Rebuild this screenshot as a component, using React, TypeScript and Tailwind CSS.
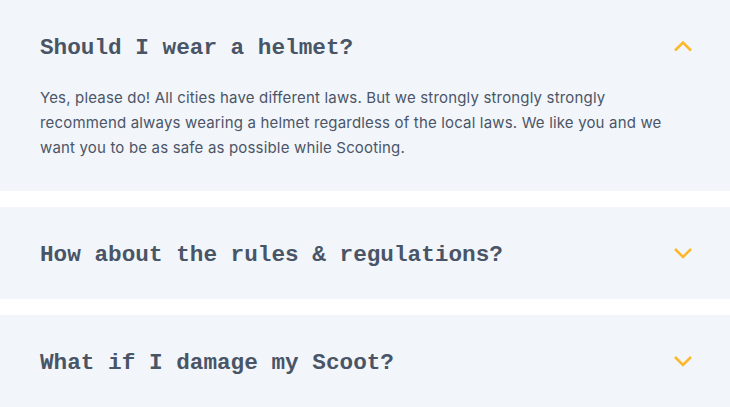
import React, { useState } from "react";

const faqs = [
  {
    q: "Should I wear a helmet?",
    a: "Yes, please do! All cities have different laws. But we strongly strongly strongly recommend always wearing a helmet regardless of the local laws. We like you and we want you to be as safe as possible while Scooting.",
  },
  {
    q: "How about the rules & regulations?",
    a: "Each city has its own rules. Check your local laws before you ride.",
  },
  {
    q: "What if I damage my Scoot?",
    a: "Please let us know right away through the app so we can help.",
  },
];

function Chevron({ up }: { up: boolean }) {
  return (
    <svg width="20" height="12" viewBox="0 0 20 12" fill="none" className="shrink-0">
      <path
        d={up ? "M2 10.5 10 2.5 18 10.5" : "M2 2 10 10 18 2"}
        stroke="#fcb72b"
        strokeWidth="2.5"
      />
    </svg>
  );
}

export default function App() {
  const [open, setOpen] = useState(0);

  return (
    <div className="w-[730px] bg-white flex flex-col gap-4">
      {faqs.map((f, i) => (
        <div key={f.q} className="bg-[#f2f5fa] px-10 pt-[28px] pb-[28px]">
          <button
            onClick={() => setOpen(open === i ? -1 : i)}
            className="w-full flex items-center justify-between text-left h-9"
          >
            <span className="font-['Liberation_Mono',monospace] font-bold text-[22.7px] leading-9 pt-[3px] text-[#495567]">
              {f.q}
            </span>
            <span className="mr-[-3px]">
              <Chevron up={open === i} />
            </span>
          </button>
          {open === i && (
            <p className="mt-[21px] mb-[3px] font-['Inter',sans-serif] text-[15px] leading-[25px] tracking-[0.17px] text-[#4b5567]">
              {f.a}
            </p>
          )}
        </div>
      ))}
    </div>
  );
}
